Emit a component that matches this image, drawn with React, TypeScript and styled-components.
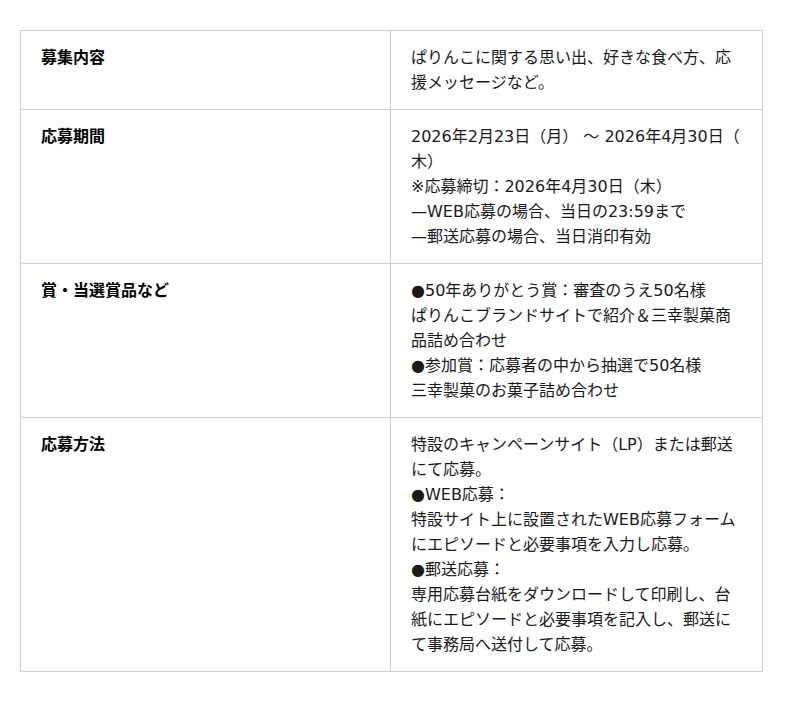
import React from 'react';
import styled, { createGlobalStyle } from 'styled-components';

const GlobalStyle = createGlobalStyle`
  html, body {
    margin: 0;
    padding: 0;
    background: #fff;
  }
  body {
    font-family: "DejaVu Sans", "Noto Sans CJK JP", sans-serif;
    color: #111;
  }
`;

const Page = styled.div`
  padding: 30px 38px 30px 20px;
`;

const Table = styled.table`
  width: 742px;
  border-collapse: collapse;
  table-layout: fixed;
  font-size: 16px;
  line-height: 25px;
`;

const LabelCol = styled.col`
  width: 370px;
`;

const BodyCol = styled.col`
  width: 372px;
`;

const Cell = styled.td<{ $head?: boolean }>`
  border: 1px solid #cfcfcf;
  padding: 14px 20px;
  vertical-align: top;
  font-weight: ${(p) => (p.$head ? 700 : 400)};
  color: ${(p) => (p.$head ? '#000' : '#1a1a1a')};
  line-break: ${(p) => (p.$head ? 'auto' : 'anywhere')};
`;

const Line = styled.div``;

interface Row {
  label: string;
  lines: string[];
}

const rows: Row[] = [
  {
    label: '募集内容',
    lines: ['ぱりんこに関する思い出、好きな食べ方、応援メッセージなど。'],
  },
  {
    label: '応募期間',
    lines: [
      '2026年2月23日（月） 〜 2026年4月30日（木）',
      '※応募締切：2026年4月30日（木）',
      '—WEB応募の場合、当日の23:59まで',
      '—郵送応募の場合、当日消印有効',
    ],
  },
  {
    label: '賞・当選賞品など',
    lines: [
      '●50年ありがとう賞：審査のうえ50名様',
      'ぱりんこブランドサイトで紹介＆三幸製菓商品詰め合わせ',
      '●参加賞：応募者の中から抽選で50名様',
      '三幸製菓のお菓子詰め合わせ',
    ],
  },
  {
    label: '応募方法',
    lines: [
      '特設のキャンペーンサイト（LP）または郵送にて応募。',
      '●WEB応募：',
      '特設サイト上に設置されたWEB応募フォームにエピソードと必要事項を入力し応募。',
      '●郵送応募：',
      '専用応募台紙をダウンロードして印刷し、台紙にエピソードと必要事項を記入し、郵送にて事務局へ送付して応募。',
    ],
  },
];

export default function App() {
  return (
    <Page>
      <GlobalStyle />
      <Table>
        <colgroup>
          <LabelCol />
          <BodyCol />
        </colgroup>
        <tbody>
          {rows.map((r) => (
            <tr key={r.label}>
              <Cell $head>{r.label}</Cell>
              <Cell>
                {r.lines.map((l, i) => (
                  <Line key={i}>{l}</Line>
                ))}
              </Cell>
            </tr>
          ))}
        </tbody>
      </Table>
    </Page>
  );
}
